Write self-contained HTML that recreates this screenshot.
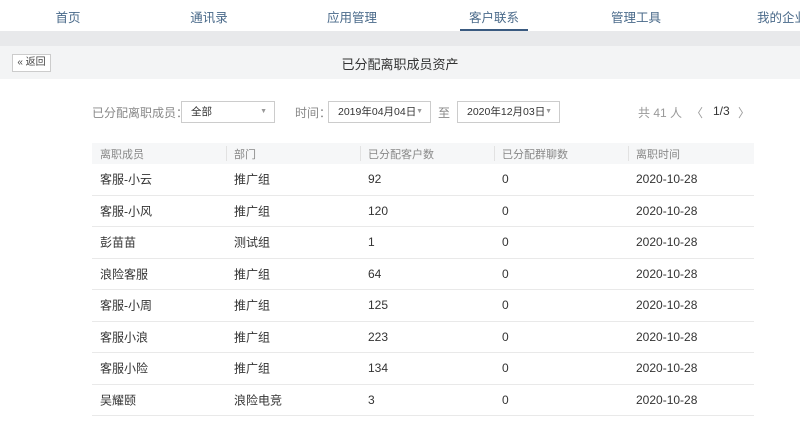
<!DOCTYPE html>
<html><head><meta charset="utf-8"><style>
*{margin:0;padding:0;box-sizing:border-box}
body{width:800px;height:421px;overflow:hidden;background:#fff;font-family:"Liberation Sans","Noto Sans CJK SC",sans-serif;font-size:12px;color:#333;position:relative}
.nav{position:absolute;top:0;left:0;width:800px;height:31px;background:#fff}
.nav span{position:absolute;top:7px;font-size:12.5px;color:#4a6a8a;transform:translateX(-50%);white-space:nowrap}
.nav .ul{position:absolute;left:460px;top:29px;width:68px;height:2px;background:#3a5a80}
.band{position:absolute;top:31px;left:0;width:800px;height:15px;background:#e8e9eb}
.tbar{position:absolute;top:46px;left:0;width:800px;height:33px;background:#f3f4f5}
.tbar .t{position:absolute;left:0;width:800px;text-align:center;top:8px;font-size:13px;color:#333}
.back{position:absolute;left:12px;top:8px;width:39px;height:18px;border:1px solid #ccc;background:#fff;font-size:10px;color:#444;text-align:center;line-height:16px}
.lab{position:absolute;top:104px;color:#888;font-size:12px}
.sel{position:absolute;top:101px;height:22px;border:1px solid #ccc;background:#fff;font-size:10.5px;color:#333;padding-left:9px;line-height:20px;white-space:nowrap}
.sel i{position:absolute;right:7px;top:0;font-style:normal;color:#999;font-size:7px;line-height:20px}
.pg{position:absolute;top:104px;font-size:12px;color:#999}
.tbl{position:absolute;left:92px;top:143px;width:662px}
.hd{height:21px;background:#f6f7f8;position:relative;color:#888;font-size:11px}
.row{height:31.5px;border-bottom:1px solid #e9e9e9;position:relative;font-size:12px;color:#333}
.c{position:absolute;top:50%;transform:translateY(-50%);white-space:nowrap}
.hd .sep{position:absolute;top:3px;height:15px;width:1px;background:#e2e2e2}
</style></head><body>
<div class="nav">
<span style="left:68px">首页</span><span style="left:209px">通讯录</span><span style="left:352px">应用管理</span><span style="left:494px">客户联系</span><span style="left:636px">管理工具</span><span style="left:782px">我的企业</span>
<div class="ul"></div></div>
<div class="band"></div>
<div class="tbar"><div class="back">« 返回</div><div class="t">已分配离职成员资产</div></div>
<div class="lab" style="left:92px">已分配离职成员：</div>
<div class="sel" style="left:181px;width:94px">全部<i>▼</i></div>
<div class="lab" style="left:295px">时间：</div>
<div class="sel" style="left:328px;width:103px">2019年04月04日<i>▼</i></div>
<div class="lab" style="left:438px">至</div>
<div class="sel" style="left:457px;width:103px">2020年12月03日<i>▼</i></div>
<div class="pg" style="left:638px">共 41 人</div>
<div class="pg" style="left:691px">〈</div>
<div class="pg" style="left:713px;color:#333">1/3</div>
<div class="pg" style="left:738px">〉</div>
<div class="tbl">
<div class="hd"><span class="c" style="left:8px">离职成员</span><div class="sep" style="left:134px"></div><span class="c" style="left:142px">部门</span><div class="sep" style="left:268px"></div><span class="c" style="left:276px">已分配客户数</span><div class="sep" style="left:402px"></div><span class="c" style="left:410px">已分配群聊数</span><div class="sep" style="left:536px"></div><span class="c" style="left:544px">离职时间</span></div>
<div class="row"><span class="c" style="left:8px">客服-小云</span><span class="c" style="left:142px">推广组</span><span class="c" style="left:276px">92</span><span class="c" style="left:410px">0</span><span class="c" style="left:544px">2020-10-28</span></div>
<div class="row"><span class="c" style="left:8px">客服-小风</span><span class="c" style="left:142px">推广组</span><span class="c" style="left:276px">120</span><span class="c" style="left:410px">0</span><span class="c" style="left:544px">2020-10-28</span></div>
<div class="row"><span class="c" style="left:8px">彭苗苗</span><span class="c" style="left:142px">测试组</span><span class="c" style="left:276px">1</span><span class="c" style="left:410px">0</span><span class="c" style="left:544px">2020-10-28</span></div>
<div class="row"><span class="c" style="left:8px">浪险客服</span><span class="c" style="left:142px">推广组</span><span class="c" style="left:276px">64</span><span class="c" style="left:410px">0</span><span class="c" style="left:544px">2020-10-28</span></div>
<div class="row"><span class="c" style="left:8px">客服-小周</span><span class="c" style="left:142px">推广组</span><span class="c" style="left:276px">125</span><span class="c" style="left:410px">0</span><span class="c" style="left:544px">2020-10-28</span></div>
<div class="row"><span class="c" style="left:8px">客服小浪</span><span class="c" style="left:142px">推广组</span><span class="c" style="left:276px">223</span><span class="c" style="left:410px">0</span><span class="c" style="left:544px">2020-10-28</span></div>
<div class="row"><span class="c" style="left:8px">客服小险</span><span class="c" style="left:142px">推广组</span><span class="c" style="left:276px">134</span><span class="c" style="left:410px">0</span><span class="c" style="left:544px">2020-10-28</span></div>
<div class="row"><span class="c" style="left:8px">吴耀颐</span><span class="c" style="left:142px">浪险电竞</span><span class="c" style="left:276px">3</span><span class="c" style="left:410px">0</span><span class="c" style="left:544px">2020-10-28</span></div>
</div>
</body></html>
